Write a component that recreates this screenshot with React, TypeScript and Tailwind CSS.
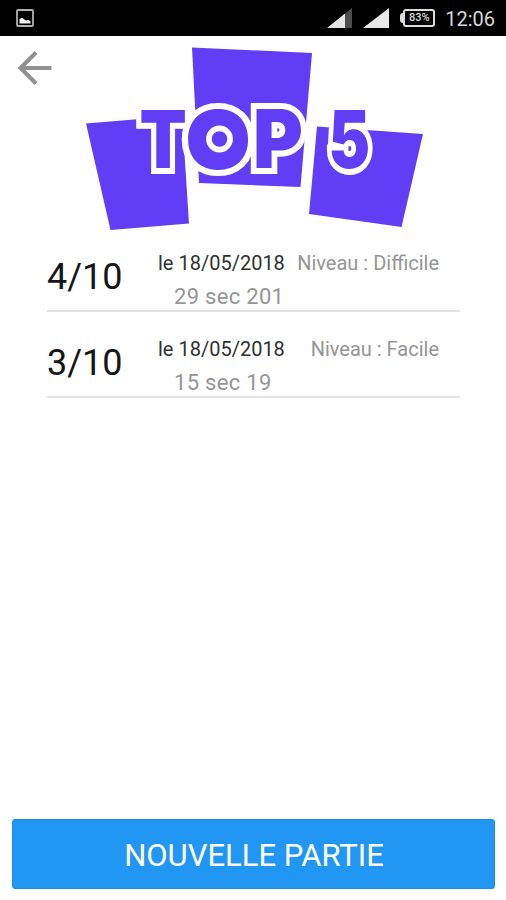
type Score = { points: string; date: string; level: string; time: string };

const scores: Score[] = [
  { points: "4/10", date: "le 18/05/2018", level: "Niveau : Difficile", time: "29 sec 201" },
  { points: "3/10", date: "le 18/05/2018", level: "Niveau : Facile", time: "15 sec 19" },
];

function StatusBar() {
  return (
    <header className="flex h-[35.5px] shrink-0 items-center bg-black pl-4 pr-[11px] text-[#d8d8d8]">
      <svg className="h-[18px] w-[18px]" viewBox="0 0 18 18" fill="none">
        <rect x="1" y="1" width="16" height="16" rx="1" stroke="#b0b0b0" strokeWidth="1.8" />
        <path d="M3.500 14.500v-4.400L6 8.800l2.500 1.800 1.500 1 2.500-.5 2 1.200v2.200z" fill="#f4f4f4" />
      </svg>
      <svg className="ml-auto h-5 w-[25px]" viewBox="0 0 25 20">
        <path d="M0 20 18 5.500V20z" fill="#e5e5e5" />
        <path d="M18 5.500 25 0V20h-7z" fill="#4d4d4d" />
      </svg>
      <svg className="ml-[11px] h-5 w-[26px]" viewBox="0 0 26 20">
        <path d="M0 20 26 0V20z" fill="#e8e8e8" />
      </svg>
      <div className="ml-[11px] flex items-center">
        <span className="h-[10px] w-[3px] rounded-l-sm bg-[#ddd]" />
        <span className="flex h-[18px] w-[32px] items-center justify-center rounded-[3px] border-2 border-[#ddd] text-[11px] font-medium">83%</span>
      </div>
      <span className="ml-[10px] pt-0.5 text-[20px] leading-none">12:06</span>
    </header>
  );
}

type GlyphProps = { char: string; transform: string };

function Glyph({ char, transform }: GlyphProps) {
  return (
    <text transform={transform} fontSize="80" fontWeight="900" fill="#613df5" stroke="#fff" strokeWidth="12" paintOrder="stroke">
      {char}
    </text>
  );
}

function Logo() {
  return (
    <svg className="h-[195px] w-[346px]" viewBox="82 40 346 195" fontFamily="Inter, sans-serif">
      <g fill="#613df5">
        <path d="M86 123.500 182 115.500 189 223.500 110.500 230z" />
        <path d="M192 47.500 312 53 300.500 187 199 183z" />
        <path d="M317 126.500 423 134 401.500 227 309 214z" />
      </g>
      <Glyph char="T" transform="translate(139.400 168) scale(.86 1)" />
      <Glyph char="P" transform="translate(252.900 168) scale(.95 1.02)" />
      <Glyph char="O" transform="translate(185.200 168.500) scale(1.06 1.02)" />
      <circle cx="219.500" cy="139" r="18" fill="#613df5" />
      <circle cx="219.500" cy="139" r="10.600" fill="#613df5" stroke="#fff" strokeWidth="5.600" />
      <Glyph char="5" transform="translate(328.500 168) scale(.78 1)" />
    </svg>
  );
}

function ScoreRow({ score }: { score: Score }) {
  return (
    <li className="flex h-[86px] border-b-2 border-[#e4e4e4]">
      <span className="w-[110px] pt-[30px] text-[36px] leading-[42px] text-[#151515]">{score.points}</span>
      <div className="flex flex-1 flex-col">
        <div className="flex h-6 justify-between pr-[21px] pl-px pt-[25px] text-[20px] leading-6 whitespace-nowrap">
          <span className="text-[#303030]">{score.date}</span>
          <span className="text-[#959595]">{score.level}</span>
        </div>
        <span className="pl-[17px] pt-[32px] text-[22px] leading-7 tracking-[0.3px] text-[#959595]">{score.time}</span>
      </div>
    </li>
  );
}

export default function App() {
  return (
    <div className="flex h-[900px] w-[506px] flex-col overflow-hidden bg-white font-[Roboto,sans-serif]">
      <StatusBar />
      <main className="flex flex-1 flex-col">
        <div className="flex h-[190px] pt-[4.5px]">
          <button aria-label="Retour" className="mt-[10px] ml-4 h-9 w-[38px]">
            <svg className="h-9 w-[38px]" viewBox="16 50 38 36" fill="none" stroke="#919191" strokeWidth="4">
              <path d="M51.500 68H21M36 52.500 20.500 68 36 83.500" />
            </svg>
          </button>
          <div className="ml-7"><Logo /></div>
        </div>
        <ul className="mr-[46px] ml-[47px]">
          {scores.map((score) => <ScoreRow key={score.points} score={score} />)}
        </ul>
      </main>
      <button className="mr-[11px] ml-3 mb-[11px] h-[70px] rounded-[3px] border border-[#1b8de9] bg-[#2196f3] pt-1 pl-px text-[31px] text-white">NOUVELLE PARTIE</button>
    </div>
  );
}
